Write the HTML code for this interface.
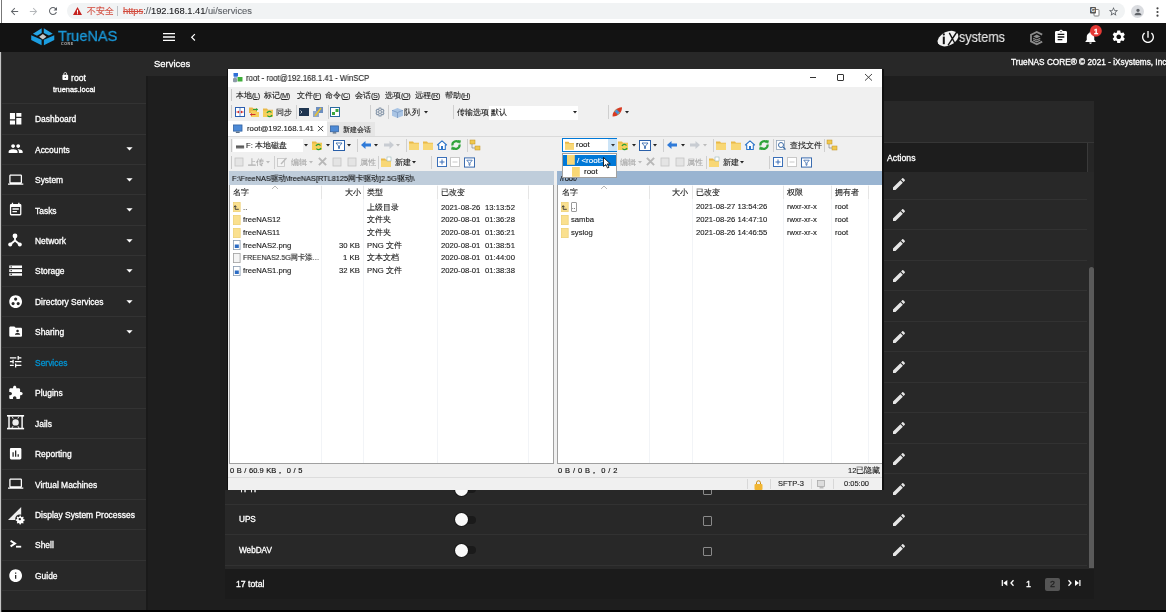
<!DOCTYPE html><html><head><meta charset="utf-8"><style>
html,body{margin:0;padding:0}
body{width:1166px;height:612px;overflow:hidden;position:relative;background:#1e1e1e;font-family:"Liberation Sans",sans-serif}
.t{position:absolute;white-space:nowrap;line-height:1;will-change:transform}
.m{-webkit-text-stroke:0.3px currentColor}
.w{-webkit-text-stroke:0.12px currentColor}
.b{position:absolute}
svg.b{overflow:visible}
</style></head><body>
<div class="b" style="left:0.00px;top:51.50px;width:146.50px;height:558.00px;background:#282828;"></div>
<div class="b" style="left:146.50px;top:51.50px;width:1019.50px;height:24.30px;background:#282828;"></div>
<div class="b" style="left:0.00px;top:609.60px;width:1166.00px;height:2.40px;background:#000;"></div>
<div class="b" style="left:0.00px;top:0.00px;width:1.00px;height:612.00px;background:#c4c4c4;"></div>
<div class="b" style="left:1.00px;top:22.50px;width:1.00px;height:590.00px;background:#383838;"></div>
<div class="b" style="left:0.00px;top:0.00px;width:1166.00px;height:22.50px;background:#ffffff;"></div>
<div class="b" style="left:1.00px;top:0.00px;width:1.00px;height:22.50px;background:#777;"></div>
<div class="b" style="left:67.00px;top:3.00px;width:1058.00px;height:16.00px;background:#f1f3f4;border-radius:8px"></div>
<svg class="b" style="left:8.80px;top:5.50px;" width="11" height="11" viewBox="0 0 24 24"><path fill="#5f6368" d="M20 11H7.83l5.59-5.59L12 4l-8 8 8 8 1.41-1.41L7.83 13H20v-2z"/></svg>
<svg class="b" style="left:28.10px;top:5.50px;" width="11" height="11" viewBox="0 0 24 24"><path fill="#b4b7ba" d="M12 4l-1.41 1.41L16.17 11H4v2h12.17l-5.58 5.59L12 20l8-8z"/></svg>
<svg class="b" style="left:47.10px;top:5.00px;" width="12" height="12" viewBox="0 0 24 24"><path fill="#5f6368" d="M17.65 6.35C16.2 4.9 14.21 4 12 4c-4.42 0-7.99 3.58-7.99 8s3.57 8 7.99 8c3.73 0 6.84-2.55 7.73-6h-2.08c-.82 2.33-3.04 4-5.65 4-3.31 0-6-2.690-6-6s2.69-6 6-6c1.66 0 3.14.69 4.22 1.78L13 11h7V4l-2.35 2.35z"/></svg>
<svg class="b" style="left:73.00px;top:6.50px;" width="9" height="8" viewBox="0 0 9 8"><path fill="#c5221f" d="M0 8 L4.5 0 L9 8 Z"/><rect x="4" y="2.8" width="1" height="3" fill="#fff"/><rect x="4" y="6.2" width="1" height="1" fill="#fff"/></svg>
<div class="t w" style="left:87.00px;top:7.30px;font-size:8.5px;color:#d24a3c;font-weight:normal;">不安全</div>
<div class="b" style="left:117.00px;top:6.00px;width:0.80px;height:10.00px;background:#bdc1c6;"></div>
<div class="t w" style="left:123.00px;top:6.71px;font-size:9.32px;color:#fff;font-weight:normal;"><span style="color:#d24a3c;text-decoration:line-through;text-decoration-thickness:0.5px">https</span><span style="color:#5f6368">://</span><span style="color:#202124">192.168.1.41</span><span style="color:#5f6368">/ui/services</span></div>
<svg class="b" style="left:1089.50px;top:7.00px;" width="9.5" height="9.5" viewBox="0 0 9.5 9.5"><rect x="4" y="2.5" width="5" height="6.5" rx="0.8" fill="#fff" stroke="#777" stroke-width="0.9"/><rect x="0" y="0" width="6" height="6.5" rx="0.8" fill="#555"/><text x="1.1" y="5.3" font-size="5.5" font-family="Liberation Sans" font-weight="bold" fill="#fff">G</text></svg>
<svg class="b" style="left:1108.00px;top:5.50px;" width="11" height="11" viewBox="0 0 24 24"><path fill="#5f6368" d="M22 9.24l-7.19-.62L12 2 9.19 8.63 2 9.24l5.46 4.73L5.82 21 12 17.27 18.18 21l-1.63-7.03L22 9.24zM12 15.4l-3.76 2.27 1-4.28-3.32-2.88 4.38-.38L12 6.1l1.71 4.04 4.38.38-3.32 2.88 1 4.28L12 15.4z"/></svg>
<svg class="b" style="left:1131.00px;top:5.00px;" width="13" height="13" viewBox="0 0 13 13"><circle cx="6.5" cy="6.5" r="6.5" fill="#dadce0"/></svg>
<svg class="b" style="left:1132.50px;top:6.50px;" width="10" height="10" viewBox="0 0 24 24"><path fill="#5f6368" d="M12 12c2.21 0 4-1.79 4-4s-1.79-4-4-4-4 1.79-4 4 1.79 4 4 4zm0 2c-2.67 0-8 1.34-8 4v2h16v-2c0-2.66-5.33-4-8-4z"/></svg>
<svg class="b" style="left:1156.00px;top:6.50px;" width="3" height="10" viewBox="0 0 3 10"><circle cx="1.5" cy="1.3" r="1.1" fill="#444"/><circle cx="1.5" cy="5" r="1.1" fill="#444"/><circle cx="1.5" cy="8.7" r="1.1" fill="#444"/></svg>
<div class="b" style="left:0.00px;top:22.50px;width:1166.00px;height:29.00px;background:#131313;"></div>
<svg class="b" style="left:30.60px;top:27.70px;" width="23.6" height="17.9" viewBox="0 0 23.6 17.9"><path fill="#27a6e6" d="M10.7 0.3 L1.9 5.8 L6 7.8 L10.7 5Z M12.8 0.3 L21.8 5.8 L17.9 7.5 L12.8 5Z"/><path fill="#1b9de0" d="M0.2 7.3 L10.6 11.8 L10.6 17.2 L0.2 12.1Z M23.3 7.3 L12.9 11.8 L12.9 17.2 L23.3 12.1Z"/><path fill="#c8c8c8" d="M11.9 6.1 L8.1 8.8 L11.9 11.4 L15.4 8.8Z"/></svg>
<div class="t w" style="left:58.30px;top:28.25px;font-size:15.3px;color:#1a98d8;font-weight:normal;transform:scaleX(0.95);transform-origin:left;-webkit-text-stroke:0.3px #1a98d8">TrueNAS</div>
<div class="t w" style="left:61.00px;top:43.45px;font-size:3.6px;color:#a0a0a0;font-weight:bold;letter-spacing:0.6px">CORE</div>
<svg class="b" style="left:161.20px;top:29.30px;" width="16" height="16" viewBox="0 0 24 24"><path fill="#fff" d="M3 18h18v-2H3v2zm0-5h18v-2H3v2zm0-7v2h18V6H3z"/></svg>
<svg class="b" style="left:186.05px;top:30.25px;" width="14.5" height="14.5" viewBox="0 0 24 24"><path fill="#fff" d="M15.41 7.41L14 6l-6 6 6 6 1.41-1.41L10.83 12z"/></svg>
<svg class="b" style="left:936.50px;top:30.50px;" width="22" height="15.2" viewBox="0 0 22 15.2"><ellipse cx="11" cy="7.6" rx="11" ry="6.9" fill="#f2f2f2" transform="rotate(-25 11 7.6)"/><rect x="5.8" y="5.6" width="2" height="7.6" fill="#131313"/><circle cx="6.8" cy="3.4" r="1.1" fill="#131313"/><path d="M12.3 1.8 L18.5 13.5 M19.8 1 L11 14.5" stroke="#131313" stroke-width="1.4"/></svg>
<div class="t w" style="left:959.30px;top:31.23px;font-size:13.9px;color:#e8e8e8;font-weight:normal;transform:scaleX(0.9);transform-origin:left">systems</div>
<svg class="b" style="left:1029.70px;top:30.80px;" width="13.5" height="14.2" viewBox="0 0 13.5 14.2"><path d="M12.2 3.6 L6.75 0.9 L1 3.8 L1 10.4 L6.75 13.3 L12.2 10.6" stroke="#8c8c8c" stroke-width="1.8" fill="none"/><path d="M6.75 3.6 L10.3 5.4 L6.75 7.2 L3.2 5.4Z" fill="#8c8c8c"/><path d="M3.2 7.2 L6.75 9 L10.3 7.2" stroke="#8c8c8c" stroke-width="1.1" fill="none"/><path d="M3.2 9 L6.75 10.8 L10.3 9" stroke="#8c8c8c" stroke-width="1.1" fill="none"/></svg>
<svg class="b" style="left:1053.00px;top:29.10px;" width="16" height="16" viewBox="0 0 24 24"><path fill="#fff" d="M19 3h-4.18C14.4 1.84 13.3 1 12 1c-1.3 0-2.4.84-2.82 2H5c-1.1 0-2 .9-2 2v14c0 1.1.9 2 2 2h14c1.1 0 2-.9 2-2V5c0-1.1-.9-2-2-2zm-7 0c.55 0 1 .45 1 1s-.45 1-1 1-1-.45-1-1 .45-1 1-1zm2 14H7v-2h7v2zm3-4H7v-2h10v2zm0-4H7V7h10v2z"/></svg>
<svg class="b" style="left:1082.50px;top:30.30px;" width="15" height="15" viewBox="0 0 24 24"><path fill="#fff" d="M12 22c1.1 0 2-.9 2-2h-4c0 1.1.89 2 2 2zm6-6v-5c0-3.07-1.64-5.64-4.5-6.32V4c0-.83-.67-1.5-1.5-1.5s-1.5.67-1.5 1.5v.68C7.63 5.36 6 7.92 6 11v5l-2 2v1h16v-1l-2-2z"/></svg>
<svg class="b" style="left:1090.40px;top:25.20px;" width="11.8" height="11.8" viewBox="0 0 11.8 11.8"><circle cx="5.9" cy="5.9" r="5.9" fill="#e53935"/></svg>
<div class="t m" style="left:1094.10px;top:27.75px;font-size:7.5px;color:#fff;font-weight:bold;">1</div>
<svg class="b" style="left:1111.45px;top:29.45px;" width="15.5" height="15.5" viewBox="0 0 24 24"><path fill="#fff" d="M19.14 12.94c.04-.3.06-.61.06-.94 0-.32-.02-.64-.07-.94l2.03-1.58c.18-.14.23-.41.12-.61l-1.92-3.32c-.12-.22-.37-.29-.59-.22l-2.39.96c-.5-.38-1.03-.7-1.62-.94l-.36-2.54c-.04-.24-.24-.41-.48-.41h-3.84c-.24 0-.43.17-.47.41l-.36 2.54c-.59.24-1.13.57-1.62.94l-2.39-.96c-.22-.08-.47 0-.59.22L2.74 8.87c-.12.21-.08.47.12.61l2.03 1.58c-.05.3-.09.63-.09.94s.02.64.07.94l-2.03 1.58c-.18.14-.23.41-.12.61l1.92 3.32c.12.22.37.29.59.22l2.39-.96c.5.38 1.03.7 1.62.94l.36 2.54c.05.24.24.41.48.41h3.84c.24 0 .44-.17.47-.41l.36-2.54c.59-.24 1.13-.56 1.62-.94l2.39.96c.22.08.47 0 .59-.22l1.92-3.32c.12-.22.07-.47-.12-.61l-2.01-1.58zM12 15.6c-1.98 0-3.6-1.62-3.6-3.6s1.62-3.6 3.6-3.6 3.6 1.62 3.6 3.6-1.62 3.6-3.6 3.6z"/></svg>
<svg class="b" style="left:1140.40px;top:29.40px;" width="16" height="16" viewBox="0 0 24 24"><path fill="#fff" d="M13 3h-2v10h2V3zm4.83 2.170l-1.42 1.42C17.99 7.86 19 9.81 19 12c0 3.87-3.13 7-7 7s-7-3.13-7-7c0-2.19 1.01-4.14 2.58-5.42L6.17 5.17C4.23 6.82 3 9.26 3 12c0 4.97 4.03 9 9 9s9-4.03 9-9c0-2.74-1.23-5.18-3.17-6.83z"/></svg>
<svg class="b" style="left:60.50px;top:72.30px;" width="8.6" height="8.6" viewBox="0 0 24 24"><path fill="#fff" d="M18 8h-1V6c0-2.76-2.24-5-5-5S7 3.24 7 6v2H6c-1.1 0-2 .9-2 2v10c0 1.1.9 2 2 2h12c1.1 0 2-.9 2-2V10c0-1.1-.9-2-2-2zm-6 9c-1.1 0-2-.9-2-2s.9-2 2-2 2 .9 2 2-.9 2-2 2zm3.1-9H8.9V6c0-1.71 1.39-3.1 3.1-3.1 1.71 0 3.1 1.39 3.1 3.1v2z"/></svg>
<div class="t m" style="left:70.60px;top:74.14px;font-size:8.7px;color:#fff;font-weight:normal;">root</div>
<div class="t m" style="left:52.60px;top:85.69px;font-size:7.45px;color:#fff;font-weight:normal;">truenas.local</div>
<div class="b" style="left:2.00px;top:103.10px;width:144.50px;height:1.00px;background:#333333;"></div>
<div class="t m" style="left:35.30px;top:115.15px;font-size:8.45px;color:#fff;font-weight:normal;">Dashboard</div>
<svg class="b" style="left:7.95px;top:110.87px;" width="15.3" height="15.3" viewBox="0 0 24 24"><path fill="#fff" d="M3 13h8V3H3v10zm0 8h8v-6H3v6zm10 0h8V11h-8v10zm0-18v6h8V3h-8z"/></svg>
<div class="b" style="left:2.00px;top:133.55px;width:144.50px;height:1.00px;background:#333333;"></div>
<div class="t m" style="left:35.30px;top:145.60px;font-size:8.45px;color:#fff;font-weight:normal;">Accounts</div>
<svg class="b" style="left:122.10px;top:141.47px;" width="15" height="15" viewBox="0 0 24 24"><path fill="#fff" d="M7 10l5 5 5-5z"/></svg>
<svg class="b" style="left:7.95px;top:141.32px;" width="15.3" height="15.3" viewBox="0 0 24 24"><path fill="#fff" d="M16 11c1.66 0 2.99-1.34 2.99-3S17.66 5 16 5c-1.66 0-3 1.34-3 3s1.34 3 3 3zm-8 0c1.66 0 2.99-1.34 2.99-3S9.66 5 8 5C6.34 5 5 6.34 5 8s1.34 3 3 3zm0 2c-2.330 0-7 1.17-7 3.5V19h14v-2.5c0-2.33-4.67-3.5-7-3.5zm8 0c-.29 0-.62.02-.97.05 1.16.84 1.97 1.97 1.97 3.45V19h6v-2.5c0-2.33-4.670-3.5-7-3.5z"/></svg>
<div class="b" style="left:2.00px;top:164.00px;width:144.50px;height:1.00px;background:#333333;"></div>
<div class="t m" style="left:35.30px;top:176.05px;font-size:8.45px;color:#fff;font-weight:normal;">System</div>
<svg class="b" style="left:122.10px;top:171.93px;" width="15" height="15" viewBox="0 0 24 24"><path fill="#fff" d="M7 10l5 5 5-5z"/></svg>
<svg class="b" style="left:7.95px;top:171.78px;" width="15.3" height="15.3" viewBox="0 0 24 24"><path fill="#fff" d="M20 18c1.1 0 1.99-.9 1.99-2L22 6c0-1.1-.9-2-2-2H4c-1.1 0-2 .9-2 2v10c0 1.1.9 2 2 2H0v2h24v-2h-4zM4 6h16v10H4V6z"/></svg>
<div class="b" style="left:2.00px;top:194.45px;width:144.50px;height:1.00px;background:#333333;"></div>
<div class="t m" style="left:35.30px;top:206.50px;font-size:8.45px;color:#fff;font-weight:normal;">Tasks</div>
<svg class="b" style="left:122.10px;top:202.38px;" width="15" height="15" viewBox="0 0 24 24"><path fill="#fff" d="M7 10l5 5 5-5z"/></svg>
<svg class="b" style="left:7.95px;top:202.22px;" width="15.3" height="15.3" viewBox="0 0 24 24"><path fill="#fff" d="M17 10H7v2h10v-2zm2-7h-1V1h-2v2H8V1H6v2H5c-1.11 0-1.99.9-1.99 2L3 19c0 1.1.89 2 2 2h14c1.1 0 2-.9 2-2V5c0-1.1-.9-2-2-2zm0 16H5V8h14v11zm-5-5H7v2h7v-2z"/></svg>
<div class="b" style="left:2.00px;top:224.90px;width:144.50px;height:1.00px;background:#333333;"></div>
<div class="t m" style="left:35.30px;top:236.95px;font-size:8.45px;color:#fff;font-weight:normal;">Network</div>
<svg class="b" style="left:122.10px;top:232.83px;" width="15" height="15" viewBox="0 0 24 24"><path fill="#fff" d="M7 10l5 5 5-5z"/></svg>
<svg class="b" style="left:7.50px;top:233.03px;" width="14" height="14" viewBox="0 0 14 14"><circle cx="7" cy="3" r="2.4" fill="#fff"/><circle cx="2.2" cy="11.5" r="2" fill="#fff"/><circle cx="11.8" cy="11.5" r="2" fill="#fff"/><path d="M7 3 V7.5 L2.2 11.5 M7 7.5 L11.8 11.5" stroke="#fff" stroke-width="1.8" fill="none"/></svg>
<div class="b" style="left:2.00px;top:255.35px;width:144.50px;height:1.00px;background:#333333;"></div>
<div class="t m" style="left:35.30px;top:267.40px;font-size:8.45px;color:#fff;font-weight:normal;">Storage</div>
<svg class="b" style="left:122.10px;top:263.28px;" width="15" height="15" viewBox="0 0 24 24"><path fill="#fff" d="M7 10l5 5 5-5z"/></svg>
<svg class="b" style="left:7.95px;top:263.13px;" width="15.3" height="15.3" viewBox="0 0 24 24"><path fill="#fff" d="M2 20h20v-4H2v4zm2-3h2v2H4v-2zM2 4v4h20V4H2zm4 3H4V5h2v2zm-4 7h20v-4H2v4zm2-3h2v2H4v-2z"/></svg>
<div class="b" style="left:2.00px;top:285.80px;width:144.50px;height:1.00px;background:#333333;"></div>
<div class="t m" style="left:35.30px;top:297.85px;font-size:8.45px;color:#fff;font-weight:normal;">Directory Services</div>
<svg class="b" style="left:122.10px;top:293.73px;" width="15" height="15" viewBox="0 0 24 24"><path fill="#fff" d="M7 10l5 5 5-5z"/></svg>
<svg class="b" style="left:7.95px;top:293.58px;" width="15.3" height="15.3" viewBox="0 0 24 24"><path fill="#fff" d="M12 2C6.48 2 2 6.48 2 12s4.48 10 10 10 10-4.48 10-10S17.52 2 12 2zM8 17.5c-1.38 0-2.5-1.12-2.5-2.5s1.12-2.5 2.5-2.5 2.5 1.12 2.5 2.5-1.12 2.5-2.5 2.5zM9.5 8c0-1.38 1.12-2.5 2.5-2.5s2.5 1.12 2.5 2.5-1.12 2.5-2.5 2.5S9.5 9.38 9.5 8zm6.5 9.5c-1.38 0-2.5-1.12-2.5-2.5s1.12-2.5 2.5-2.5 2.5 1.12 2.5 2.5-1.12 2.5-2.5 2.5z"/></svg>
<div class="b" style="left:2.00px;top:316.25px;width:144.50px;height:1.00px;background:#333333;"></div>
<div class="t m" style="left:35.30px;top:328.30px;font-size:8.45px;color:#fff;font-weight:normal;">Sharing</div>
<svg class="b" style="left:122.10px;top:324.18px;" width="15" height="15" viewBox="0 0 24 24"><path fill="#fff" d="M7 10l5 5 5-5z"/></svg>
<svg class="b" style="left:7.95px;top:324.03px;" width="15.3" height="15.3" viewBox="0 0 24 24"><path fill="#fff" d="M20 6h-8l-2-2H4c-1.1 0-1.99.9-1.99 2L2 18c0 1.1.9 2 2 2h16c1.1 0 2-.9 2-2V8c0-1.1-.9-2-2-2zm-5 3c1.1 0 2 .9 2 2s-.9 2-2 2-2-.9-2-2 .9-2 2-2zm4 8h-8v-1c0-1.33 2.67-2 4-2s4 .67 4 2v1z"/></svg>
<div class="b" style="left:2.00px;top:346.70px;width:144.50px;height:1.00px;background:#333333;"></div>
<div class="t m" style="left:35.30px;top:358.75px;font-size:8.45px;color:#0095d5;font-weight:normal;">Services</div>
<svg class="b" style="left:7.95px;top:354.48px;" width="15.3" height="15.3" viewBox="0 0 24 24"><path fill="#fff" d="M3 17v2h6v-2H3zM3 5v2h10V5H3zm10 16v-2h8v-2h-8v-2h-2v6h2zM7 9v2H3v2h4v2h2V9H7zm14 4v-2H11v2h10zm-6-4h2V7h4V5h-4V3h-2v6z"/></svg>
<div class="b" style="left:2.00px;top:377.15px;width:144.50px;height:1.00px;background:#333333;"></div>
<div class="t m" style="left:35.30px;top:389.20px;font-size:8.45px;color:#fff;font-weight:normal;">Plugins</div>
<svg class="b" style="left:7.95px;top:384.93px;" width="15.3" height="15.3" viewBox="0 0 24 24"><path fill="#fff" d="M20.5 11H19V7c0-1.1-.9-2-2-2h-4V3.5C13 2.12 11.880 1 10.5 1S8 2.12 8 3.5V5H4c-1.1 0-1.99.9-1.99 2v3.8H3.5c1.49 0 2.7 1.21 2.7 2.7s-1.21 2.7-2.7 2.7H2V20c0 1.1.9 2 2 2h3.8v-1.5c0-1.49 1.21-2.7 2.7-2.7 1.49 0 2.7 1.21 2.7 2.7V22H17c1.1 0 2-.9 2-2v-4h1.5c1.38 0 2.5-1.12 2.5-2.5S21.88 11 20.5 11z"/></svg>
<div class="b" style="left:2.00px;top:407.60px;width:144.50px;height:1.00px;background:#333333;"></div>
<div class="t m" style="left:35.30px;top:419.65px;font-size:8.45px;color:#fff;font-weight:normal;">Jails</div>
<svg class="b" style="left:6.90px;top:415.23px;" width="17.1" height="14.4" viewBox="0 0 17.1 14.4"><rect x="0" y="0" width="17.1" height="1.6" fill="#fff"/><rect x="0" y="12.8" width="17.1" height="1.6" fill="#fff"/><rect x="1.3" y="1" width="1.4" height="12.4" fill="#fff"/><rect x="14.4" y="1" width="1.4" height="12.4" fill="#fff"/><path d="M5 1.5 L12 13 M12 1.5 L5 13" stroke="#ddd" stroke-width="1"/><circle cx="8.6" cy="7.4" r="4.3" fill="#282828"/><circle cx="8.6" cy="7.4" r="3.2" fill="#eee"/></svg>
<div class="b" style="left:2.00px;top:438.05px;width:144.50px;height:1.00px;background:#333333;"></div>
<div class="t m" style="left:35.30px;top:450.10px;font-size:8.45px;color:#fff;font-weight:normal;">Reporting</div>
<svg class="b" style="left:7.95px;top:445.83px;" width="15.3" height="15.3" viewBox="0 0 24 24"><path fill="#fff" d="M19 3H5c-1.1 0-2 .9-2 2v14c0 1.1.9 2 2 2h14c1.1 0 2-.9 2-2V5c0-1.1-.9-2-2-2zM9 17H7v-7h2v7zm4 0h-2V7h2v10zm4 0h-2v-4h2v4z"/></svg>
<div class="b" style="left:2.00px;top:468.50px;width:144.50px;height:1.00px;background:#333333;"></div>
<div class="t m" style="left:35.30px;top:480.55px;font-size:8.45px;color:#fff;font-weight:normal;">Virtual Machines</div>
<svg class="b" style="left:7.95px;top:476.28px;" width="15.3" height="15.3" viewBox="0 0 24 24"><path fill="#fff" d="M20 18c1.1 0 1.99-.9 1.99-2L22 6c0-1.1-.9-2-2-2H4c-1.1 0-2 .9-2 2v10c0 1.1.9 2 2 2H0v2h24v-2h-4zM4 6h16v10H4V6z"/></svg>
<div class="b" style="left:2.00px;top:498.95px;width:144.50px;height:1.00px;background:#333333;"></div>
<div class="t m" style="left:35.30px;top:511.00px;font-size:8.45px;color:#fff;font-weight:normal;">Display System Processes</div>
<svg class="b" style="left:7.80px;top:507.07px;" width="17" height="15" viewBox="0 0 17 15"><path fill="#eee" d="M0 13 L13.2 0 L13.2 13 Z"/><circle cx="11.8" cy="12.1" r="4.6" fill="#282828"/><path fill="#fff" d="M11.8 8.6 l0.9 0 0.3 1.1 1 0.5 1-0.6 0.7 0.7 -0.6 1 0.5 1 1.1 0.3 0 1 -1.1 0.3 -0.5 1 0.6 1 -0.7 0.7 -1-0.6 -1 0.5 -0.3 1.1 -1 0 -0.3-1.1 -1-0.5 -1 0.6 -0.7-0.7 0.6-1 -0.5-1 -1.1-0.3 0-1 1.1-0.3 0.5-1 -0.6-1 0.7-0.7 1 0.6 1-0.5z"/><circle cx="11.8" cy="12.1" r="1.2" fill="#282828"/></svg>
<div class="b" style="left:2.00px;top:529.40px;width:144.50px;height:1.00px;background:#333333;"></div>
<div class="t m" style="left:35.30px;top:541.45px;font-size:8.45px;color:#fff;font-weight:normal;">Shell</div>
<svg class="b" style="left:9.80px;top:540.32px;" width="11.2" height="7.6" viewBox="0 0 11.2 7.6"><path d="M0.6 0.8 L5 3.6 L0.6 6.4" stroke="#fff" stroke-width="1.9" fill="none"/><rect x="6" y="5.8" width="5.2" height="1.8" fill="#fff"/></svg>
<div class="b" style="left:2.00px;top:559.85px;width:144.50px;height:1.00px;background:#333333;"></div>
<div class="t m" style="left:35.30px;top:571.90px;font-size:8.45px;color:#fff;font-weight:normal;">Guide</div>
<svg class="b" style="left:7.95px;top:567.62px;" width="15.3" height="15.3" viewBox="0 0 24 24"><path fill="#fff" d="M12 2C6.48 2 2 6.48 2 12s4.48 10 10 10 10-4.48 10-10S17.52 2 12 2zm1 15h-2v-6h2v6zm0-8h-2V7h2v2z"/></svg>
<div class="b" style="left:2.00px;top:590.30px;width:144.50px;height:1.00px;background:#333333;"></div>
<div class="b" style="left:146.30px;top:75.80px;width:1.60px;height:534.00px;background:#1a1a1a;"></div>
<div class="t m" style="left:153.70px;top:59.30px;font-size:9.45px;color:#fff;font-weight:normal;">Services</div>
<div class="t m" style="left:1010.70px;top:59.22px;font-size:8.25px;color:#fff;font-weight:normal;">TrueNAS CORE® © 2021 - iXsystems, Inc.</div>
<div class="b" style="left:224.50px;top:101.00px;width:869.30px;height:41.40px;background:#282828;"></div>
<div class="b" style="left:224.50px;top:142.00px;width:869.30px;height:1.00px;background:#363636;"></div>
<div class="b" style="left:224.50px;top:143.00px;width:862.90px;height:29.00px;background:#1d1d1d;"></div>
<div class="b" style="left:1087.40px;top:143.00px;width:6.40px;height:29.00px;background:#262626;"></div>
<div class="b" style="left:1087.20px;top:143.00px;width:1.00px;height:29.00px;background:#3a3a3a;"></div>
<div class="b" style="left:224.50px;top:172.00px;width:869.30px;height:396.50px;background:#282828;"></div>
<div class="b" style="left:224.50px;top:198.50px;width:862.90px;height:1.00px;background:#323232;"></div>
<div class="b" style="left:224.50px;top:229.00px;width:862.90px;height:1.00px;background:#323232;"></div>
<div class="b" style="left:224.50px;top:259.50px;width:862.90px;height:1.00px;background:#323232;"></div>
<div class="b" style="left:224.50px;top:290.00px;width:862.90px;height:1.00px;background:#323232;"></div>
<div class="b" style="left:224.50px;top:320.50px;width:862.90px;height:1.00px;background:#323232;"></div>
<div class="b" style="left:224.50px;top:351.00px;width:862.90px;height:1.00px;background:#323232;"></div>
<div class="b" style="left:224.50px;top:381.50px;width:862.90px;height:1.00px;background:#323232;"></div>
<div class="b" style="left:224.50px;top:412.00px;width:862.90px;height:1.00px;background:#323232;"></div>
<div class="b" style="left:224.50px;top:442.50px;width:862.90px;height:1.00px;background:#323232;"></div>
<div class="b" style="left:224.50px;top:473.00px;width:862.90px;height:1.00px;background:#323232;"></div>
<div class="b" style="left:224.50px;top:503.50px;width:862.90px;height:1.00px;background:#323232;"></div>
<div class="b" style="left:224.50px;top:534.00px;width:862.90px;height:1.00px;background:#323232;"></div>
<div class="b" style="left:224.50px;top:564.50px;width:862.90px;height:1.00px;background:#323232;"></div>
<div class="b" style="left:224.50px;top:568.50px;width:869.30px;height:30.80px;background:#1b1b1b;"></div>
<div class="b" style="left:1089.00px;top:267.00px;width:5.00px;height:301.00px;background:#5a5a5a;border-radius:2.5px 2.5px 0 0"></div>
<div class="t m" style="left:887.00px;top:154.44px;font-size:8.7px;color:#fff;font-weight:normal;">Actions</div>
<svg class="b" style="left:891.30px;top:176.30px;" width="16" height="16" viewBox="0 0 24 24"><path fill="#e6e6e6" d="M3 17.25V21h3.75L17.81 9.94l-3.75-3.75L3 17.25zM20.71 7.04c.39-.39.39-1.02 0-1.41l-2.34-2.34c-.39-.39-1.02-.39-1.41 0l-1.83 1.83 3.75 3.75 1.83-1.83z"/></svg>
<div class="b" style="left:455.70px;top:180.45px;width:20.60px;height:7.70px;background:#1a1a1a;border-radius:4px"></div>
<div class="b" style="left:454.90px;top:177.85px;width:12.9px;height:12.9px;border-radius:50%;background:#fafafa;box-shadow:0 0 0 0.8px #151515"></div>
<div class="b" style="left:702.70px;top:180.70px;width:9.80px;height:9.80px;background:transparent;box-sizing:border-box;border:1.4px solid #8a8a8a;border-radius:1px"></div>
<svg class="b" style="left:891.30px;top:206.80px;" width="16" height="16" viewBox="0 0 24 24"><path fill="#e6e6e6" d="M3 17.25V21h3.75L17.81 9.94l-3.75-3.75L3 17.25zM20.71 7.04c.39-.39.39-1.02 0-1.41l-2.34-2.34c-.39-.39-1.02-.39-1.41 0l-1.83 1.83 3.75 3.75 1.83-1.83z"/></svg>
<div class="b" style="left:455.70px;top:210.95px;width:20.60px;height:7.70px;background:#1a1a1a;border-radius:4px"></div>
<div class="b" style="left:454.90px;top:208.35px;width:12.9px;height:12.9px;border-radius:50%;background:#fafafa;box-shadow:0 0 0 0.8px #151515"></div>
<div class="b" style="left:702.70px;top:211.20px;width:9.80px;height:9.80px;background:transparent;box-sizing:border-box;border:1.4px solid #8a8a8a;border-radius:1px"></div>
<svg class="b" style="left:891.30px;top:237.30px;" width="16" height="16" viewBox="0 0 24 24"><path fill="#e6e6e6" d="M3 17.25V21h3.75L17.81 9.94l-3.75-3.75L3 17.25zM20.71 7.04c.39-.39.39-1.02 0-1.41l-2.34-2.34c-.39-.39-1.02-.39-1.41 0l-1.83 1.83 3.75 3.75 1.83-1.83z"/></svg>
<div class="b" style="left:455.70px;top:241.45px;width:20.60px;height:7.70px;background:#1a1a1a;border-radius:4px"></div>
<div class="b" style="left:454.90px;top:238.85px;width:12.9px;height:12.9px;border-radius:50%;background:#fafafa;box-shadow:0 0 0 0.8px #151515"></div>
<div class="b" style="left:702.70px;top:241.70px;width:9.80px;height:9.80px;background:transparent;box-sizing:border-box;border:1.4px solid #8a8a8a;border-radius:1px"></div>
<svg class="b" style="left:891.30px;top:267.80px;" width="16" height="16" viewBox="0 0 24 24"><path fill="#e6e6e6" d="M3 17.25V21h3.75L17.81 9.94l-3.75-3.75L3 17.25zM20.71 7.04c.39-.39.39-1.02 0-1.41l-2.34-2.34c-.39-.39-1.02-.39-1.41 0l-1.83 1.83 3.75 3.75 1.83-1.83z"/></svg>
<div class="b" style="left:455.70px;top:271.95px;width:20.60px;height:7.70px;background:#1a1a1a;border-radius:4px"></div>
<div class="b" style="left:454.90px;top:269.35px;width:12.9px;height:12.9px;border-radius:50%;background:#fafafa;box-shadow:0 0 0 0.8px #151515"></div>
<div class="b" style="left:702.70px;top:272.20px;width:9.80px;height:9.80px;background:transparent;box-sizing:border-box;border:1.4px solid #8a8a8a;border-radius:1px"></div>
<svg class="b" style="left:891.30px;top:298.30px;" width="16" height="16" viewBox="0 0 24 24"><path fill="#e6e6e6" d="M3 17.25V21h3.75L17.81 9.94l-3.75-3.75L3 17.25zM20.71 7.04c.39-.39.39-1.02 0-1.41l-2.34-2.34c-.39-.39-1.02-.39-1.41 0l-1.83 1.83 3.75 3.75 1.83-1.83z"/></svg>
<div class="b" style="left:455.70px;top:302.45px;width:20.60px;height:7.70px;background:#1a1a1a;border-radius:4px"></div>
<div class="b" style="left:454.90px;top:299.85px;width:12.9px;height:12.9px;border-radius:50%;background:#fafafa;box-shadow:0 0 0 0.8px #151515"></div>
<div class="b" style="left:702.70px;top:302.70px;width:9.80px;height:9.80px;background:transparent;box-sizing:border-box;border:1.4px solid #8a8a8a;border-radius:1px"></div>
<svg class="b" style="left:891.30px;top:328.80px;" width="16" height="16" viewBox="0 0 24 24"><path fill="#e6e6e6" d="M3 17.25V21h3.75L17.81 9.94l-3.75-3.75L3 17.25zM20.71 7.04c.39-.39.39-1.02 0-1.41l-2.34-2.34c-.39-.39-1.02-.39-1.41 0l-1.83 1.83 3.75 3.75 1.83-1.83z"/></svg>
<div class="b" style="left:455.70px;top:332.95px;width:20.60px;height:7.70px;background:#1a1a1a;border-radius:4px"></div>
<div class="b" style="left:454.90px;top:330.35px;width:12.9px;height:12.9px;border-radius:50%;background:#fafafa;box-shadow:0 0 0 0.8px #151515"></div>
<div class="b" style="left:702.70px;top:333.20px;width:9.80px;height:9.80px;background:transparent;box-sizing:border-box;border:1.4px solid #8a8a8a;border-radius:1px"></div>
<svg class="b" style="left:891.30px;top:359.30px;" width="16" height="16" viewBox="0 0 24 24"><path fill="#e6e6e6" d="M3 17.25V21h3.75L17.81 9.94l-3.75-3.75L3 17.25zM20.71 7.04c.39-.39.39-1.02 0-1.41l-2.34-2.34c-.39-.39-1.02-.39-1.41 0l-1.83 1.83 3.75 3.75 1.83-1.83z"/></svg>
<div class="b" style="left:455.70px;top:363.45px;width:20.60px;height:7.70px;background:#1a1a1a;border-radius:4px"></div>
<div class="b" style="left:454.90px;top:360.85px;width:12.9px;height:12.9px;border-radius:50%;background:#fafafa;box-shadow:0 0 0 0.8px #151515"></div>
<div class="b" style="left:702.70px;top:363.70px;width:9.80px;height:9.80px;background:transparent;box-sizing:border-box;border:1.4px solid #8a8a8a;border-radius:1px"></div>
<svg class="b" style="left:891.30px;top:389.80px;" width="16" height="16" viewBox="0 0 24 24"><path fill="#e6e6e6" d="M3 17.25V21h3.75L17.81 9.94l-3.75-3.75L3 17.25zM20.71 7.04c.39-.39.39-1.02 0-1.41l-2.34-2.34c-.39-.39-1.02-.39-1.41 0l-1.83 1.83 3.75 3.75 1.83-1.83z"/></svg>
<div class="b" style="left:455.70px;top:393.95px;width:20.60px;height:7.70px;background:#1a1a1a;border-radius:4px"></div>
<div class="b" style="left:454.90px;top:391.35px;width:12.9px;height:12.9px;border-radius:50%;background:#fafafa;box-shadow:0 0 0 0.8px #151515"></div>
<div class="b" style="left:702.70px;top:394.20px;width:9.80px;height:9.80px;background:transparent;box-sizing:border-box;border:1.4px solid #8a8a8a;border-radius:1px"></div>
<svg class="b" style="left:891.30px;top:420.30px;" width="16" height="16" viewBox="0 0 24 24"><path fill="#e6e6e6" d="M3 17.25V21h3.75L17.81 9.94l-3.75-3.75L3 17.25zM20.71 7.04c.39-.39.39-1.02 0-1.41l-2.34-2.34c-.39-.39-1.02-.39-1.41 0l-1.83 1.83 3.75 3.75 1.83-1.83z"/></svg>
<div class="b" style="left:455.70px;top:424.45px;width:20.60px;height:7.70px;background:#1a1a1a;border-radius:4px"></div>
<div class="b" style="left:454.90px;top:421.85px;width:12.9px;height:12.9px;border-radius:50%;background:#fafafa;box-shadow:0 0 0 0.8px #151515"></div>
<div class="b" style="left:702.70px;top:424.70px;width:9.80px;height:9.80px;background:transparent;box-sizing:border-box;border:1.4px solid #8a8a8a;border-radius:1px"></div>
<svg class="b" style="left:891.30px;top:450.80px;" width="16" height="16" viewBox="0 0 24 24"><path fill="#e6e6e6" d="M3 17.25V21h3.75L17.81 9.94l-3.75-3.75L3 17.25zM20.71 7.04c.39-.39.39-1.02 0-1.41l-2.34-2.34c-.39-.39-1.02-.39-1.41 0l-1.83 1.83 3.75 3.75 1.83-1.83z"/></svg>
<div class="b" style="left:455.70px;top:454.95px;width:20.60px;height:7.70px;background:#1a1a1a;border-radius:4px"></div>
<div class="b" style="left:454.90px;top:452.35px;width:12.9px;height:12.9px;border-radius:50%;background:#fafafa;box-shadow:0 0 0 0.8px #151515"></div>
<div class="b" style="left:702.70px;top:455.20px;width:9.80px;height:9.80px;background:transparent;box-sizing:border-box;border:1.4px solid #8a8a8a;border-radius:1px"></div>
<svg class="b" style="left:891.30px;top:481.30px;" width="16" height="16" viewBox="0 0 24 24"><path fill="#e6e6e6" d="M3 17.25V21h3.75L17.81 9.94l-3.75-3.75L3 17.25zM20.71 7.04c.39-.39.39-1.02 0-1.41l-2.34-2.34c-.39-.39-1.02-.39-1.41 0l-1.83 1.83 3.75 3.75 1.83-1.83z"/></svg>
<div class="t m" style="left:238.50px;top:485.66px;font-size:8.2px;color:#fff;font-weight:normal;">TFTP</div>
<div class="b" style="left:455.70px;top:485.45px;width:20.60px;height:7.70px;background:#1a1a1a;border-radius:4px"></div>
<div class="b" style="left:454.90px;top:482.85px;width:12.9px;height:12.9px;border-radius:50%;background:#fafafa;box-shadow:0 0 0 0.8px #151515"></div>
<div class="b" style="left:702.70px;top:485.70px;width:9.80px;height:9.80px;background:transparent;box-sizing:border-box;border:1.4px solid #8a8a8a;border-radius:1px"></div>
<svg class="b" style="left:891.30px;top:511.80px;" width="16" height="16" viewBox="0 0 24 24"><path fill="#e6e6e6" d="M3 17.25V21h3.75L17.81 9.94l-3.75-3.75L3 17.25zM20.71 7.04c.39-.39.39-1.02 0-1.41l-2.34-2.34c-.39-.39-1.02-.39-1.41 0l-1.83 1.83 3.75 3.75 1.83-1.83z"/></svg>
<div class="t m" style="left:238.50px;top:516.16px;font-size:8.2px;color:#fff;font-weight:normal;">UPS</div>
<div class="b" style="left:455.70px;top:515.95px;width:20.60px;height:7.70px;background:#1a1a1a;border-radius:4px"></div>
<div class="b" style="left:454.90px;top:513.35px;width:12.9px;height:12.9px;border-radius:50%;background:#fafafa;box-shadow:0 0 0 0.8px #151515"></div>
<div class="b" style="left:702.70px;top:516.20px;width:9.80px;height:9.80px;background:transparent;box-sizing:border-box;border:1.4px solid #8a8a8a;border-radius:1px"></div>
<svg class="b" style="left:891.30px;top:542.30px;" width="16" height="16" viewBox="0 0 24 24"><path fill="#e6e6e6" d="M3 17.25V21h3.75L17.81 9.94l-3.75-3.75L3 17.25zM20.71 7.04c.39-.39.39-1.02 0-1.41l-2.34-2.34c-.39-.39-1.02-.39-1.41 0l-1.83 1.83 3.75 3.75 1.83-1.83z"/></svg>
<div class="t m" style="left:238.50px;top:546.66px;font-size:8.2px;color:#fff;font-weight:normal;">WebDAV</div>
<div class="b" style="left:455.70px;top:546.45px;width:20.60px;height:7.70px;background:#1a1a1a;border-radius:4px"></div>
<div class="b" style="left:454.90px;top:543.85px;width:12.9px;height:12.9px;border-radius:50%;background:#fafafa;box-shadow:0 0 0 0.8px #151515"></div>
<div class="b" style="left:702.70px;top:546.70px;width:9.80px;height:9.80px;background:transparent;box-sizing:border-box;border:1.4px solid #8a8a8a;border-radius:1px"></div>
<div class="t m" style="left:236.00px;top:579.64px;font-size:8.7px;color:#fff;font-weight:normal;">17 total</div>
<svg class="b" style="left:998.50px;top:578.80px;" width="20" height="8" viewBox="0 0 20 8"><rect x="2.7" y="1" width="1.2" height="6" fill="#fff"/><path d="M8.3 1 L4.3 4 L8.3 7Z" fill="#fff"/><path d="M14.5 1.3 L12 4 L14.5 6.7" stroke="#fff" stroke-width="1.3" fill="none"/></svg>
<div class="t m" style="left:1025.50px;top:580.18px;font-size:9px;color:#fff;font-weight:normal;">1</div>
<div class="b" style="left:1045.00px;top:577.80px;width:15.00px;height:13.20px;background:#555;border-radius:2px"></div>
<div class="t m" style="left:1049.60px;top:579.98px;font-size:9px;color:#222;font-weight:normal;">2</div>
<svg class="b" style="left:1064.70px;top:578.80px;" width="20" height="8" viewBox="0 0 20 8"><path d="M3.5 1.3 L6 4 L3.5 6.7" stroke="#fff" stroke-width="1.3" fill="none"/><path d="M10 1 L14 4 L10 7Z" fill="#fff"/><rect x="14.3" y="1" width="1.2" height="6" fill="#fff"/></svg>
<div class="b" style="left:224.00px;top:75.80px;width:4.20px;height:414.70px;background:#1e1e1e;"></div>
<div class="b" style="left:227.20px;top:68.50px;width:656.80px;height:421.70px;background:#101010;"></div>
<div class="b" style="left:228.00px;top:69.00px;width:654.40px;height:420.50px;background:#f0f0f0;"></div>
<div class="b" style="left:228.00px;top:69.00px;width:654.40px;height:17.80px;background:#ffffff;"></div>
<svg class="b" style="left:233.30px;top:72.70px;" width="9.5" height="9.2" viewBox="0 0 9.5 9.2"><rect x="0.5" y="0" width="4.5" height="3.5" fill="#2f6fd6"/><rect x="1" y="3.5" width="3" height="1" fill="#2f6fd6"/><rect x="4.5" y="4" width="5" height="4.5" fill="#3fae3a"/><rect x="0" y="5" width="4" height="4.2" rx="1" fill="#8c9aa8"/></svg>
<div class="t w" style="left:246.00px;top:73.62px;font-size:8.6px;color:#1a1a1a;font-weight:normal;transform:scaleX(0.905);transform-origin:left">root - root@192.168.1.41 - WinSCP</div>
<div class="b" style="left:810.00px;top:77.00px;width:6.00px;height:1.00px;background:#333;"></div>
<div class="b" style="left:837.20px;top:74.30px;width:6.70px;height:6.30px;background:transparent;box-sizing:border-box;border:1px solid #333;border-radius:1px"></div>
<svg class="b" style="left:864.90px;top:74.10px;" width="7" height="6.6" viewBox="0 0 7 6.6"><path d="M0 0 L7 6.6 M7 0 L0 6.6" stroke="#333" stroke-width="0.9"/></svg>
<div class="b" style="left:231.00px;top:89.00px;width:0.80px;height:12.00px;background:#c8c8c8;"></div>
<div class="t w" style="left:235.50px;top:92.27px;font-size:7.6px;color:#222;font-weight:normal;">本地<span style="font-size:7.4px;letter-spacing:-0.45px">(<u>L</u>)</span></div>
<div class="t w" style="left:264.40px;top:92.27px;font-size:7.6px;color:#222;font-weight:normal;">标记<span style="font-size:7.4px;letter-spacing:-0.45px">(<u>M</u>)</span></div>
<div class="t w" style="left:296.60px;top:92.27px;font-size:7.6px;color:#222;font-weight:normal;">文件<span style="font-size:7.4px;letter-spacing:-0.45px">(<u>F</u>)</span></div>
<div class="t w" style="left:324.70px;top:92.27px;font-size:7.6px;color:#222;font-weight:normal;">命令<span style="font-size:7.4px;letter-spacing:-0.45px">(<u>C</u>)</span></div>
<div class="t w" style="left:354.90px;top:92.27px;font-size:7.6px;color:#222;font-weight:normal;">会话<span style="font-size:7.4px;letter-spacing:-0.45px">(<u>S</u>)</span></div>
<div class="t w" style="left:384.60px;top:92.27px;font-size:7.6px;color:#222;font-weight:normal;">选项<span style="font-size:7.4px;letter-spacing:-0.45px">(<u>O</u>)</span></div>
<div class="t w" style="left:415.40px;top:92.27px;font-size:7.6px;color:#222;font-weight:normal;">远程<span style="font-size:7.4px;letter-spacing:-0.45px">(<u>R</u>)</span></div>
<div class="t w" style="left:445.30px;top:92.27px;font-size:7.6px;color:#222;font-weight:normal;">帮助<span style="font-size:7.4px;letter-spacing:-0.45px">(<u>H</u>)</span></div>
<div class="b" style="left:231.00px;top:105.00px;width:0.80px;height:13.00px;background:#c8c8c8;"></div>
<svg class="b" style="left:234.90px;top:107.00px;" width="10" height="10" viewBox="0 0 10 10"><rect x="0.5" y="0.5" width="9" height="9" fill="#fff" stroke="#2a5db0"/><path d="M5 1 V9" stroke="#2a5db0" stroke-width="0.7"/><path d="M1.5 5 H3.5 M6.5 5 H8.5" stroke="#d02020" stroke-width="1"/><path d="M4.6 5 L3 3.4 V6.6Z M5.4 5 L7 3.4 V6.6Z" fill="#d02020"/></svg>
<svg class="b" style="left:249.00px;top:107.00px;" width="10" height="10" viewBox="0 0 10 10"><path d="M0 0.5 H3.5 L4.5 1.5 H8 V6 H0Z" fill="#e9b949"/><path d="M2 4 H6 L7 5 H10 V10 H2Z" fill="#f6cf5a"/><path d="M4 2.5 H8.5 L7.5 1.3 M8.5 2.5 L7.5 3.7" stroke="#2aa03a" stroke-width="1" fill="none"/><path d="M6.5 7.5 H1.5 L2.5 6.3 M1.5 7.5 L2.5 8.7" stroke="#d03030" stroke-width="1" fill="none"/></svg>
<svg class="b" style="left:263.00px;top:107.00px;" width="10" height="10" viewBox="0 0 10 10"><path d="M0 1.5 H4 L5 2.8 H10 V10 H0Z" fill="#e9b949"/><rect x="0" y="3.5" width="10" height="6.5" fill="#f6cf5a"/><path d="M4 6 A2.5 2.5 0 0 1 8.5 5.5" stroke="#2aa03a" stroke-width="1.3" fill="none"/><path d="M9 8 A2.5 2.5 0 0 1 4.5 8.5" stroke="#2aa03a" stroke-width="1.3" fill="none"/></svg>
<div class="t w" style="left:276.00px;top:108.57px;font-size:7.6px;color:#222;font-weight:normal;">同步</div>
<div class="b" style="left:295.50px;top:105.00px;width:0.80px;height:14.00px;background:#cfcfcf;"></div>
<svg class="b" style="left:299.00px;top:107.00px;" width="10" height="10" viewBox="0 0 10 10"><rect x="0" y="1" width="10" height="8" fill="#1f3550"/><path d="M1.5 3.5 L3 5 L1.5 6.5" stroke="#fff" stroke-width="0.7" fill="none"/></svg>
<svg class="b" style="left:313.00px;top:107.00px;" width="10" height="10" viewBox="0 0 10 10"><rect x="3" y="0" width="7" height="6" fill="#6c8ebf"/><rect x="0" y="4" width="6" height="6" fill="#8fa7c9"/><path d="M2 9 L8 1" stroke="#e6c030" stroke-width="1.5"/></svg>
<div class="b" style="left:327.50px;top:105.00px;width:0.80px;height:14.00px;background:#cfcfcf;"></div>
<svg class="b" style="left:330.00px;top:107.00px;" width="10" height="10" viewBox="0 0 10 10"><rect x="0.5" y="0.5" width="9" height="9" fill="#fff" stroke="#2a6aa0"/><rect x="2" y="5" width="3" height="3" fill="#3aa63a"/><rect x="5.5" y="2" width="3" height="3" fill="#3aa63a"/></svg>
<div class="b" style="left:370.00px;top:105.00px;width:0.80px;height:14.00px;background:#cfcfcf;"></div>
<svg class="b" style="left:374.50px;top:107.00px;" width="10" height="10" viewBox="0 0 24 24"><path fill="none" stroke="#8595a8" stroke-width="2.6" d="M19.14 12.94c.04-.3.06-.61.06-.94 0-.32-.02-.64-.07-.94l2.03-1.58c.18-.14.23-.41.12-.61l-1.92-3.32c-.12-.22-.37-.29-.59-.22l-2.39.96c-.5-.38-1.03-.7-1.62-.94l-.36-2.54c-.04-.24-.24-.41-.48-.41h-3.84c-.24 0-.43.17-.47.41l-.36 2.54c-.59.24-1.13.57-1.62.94l-2.39-.96c-.22-.08-.47 0-.59.22L2.74 8.87c-.12.21-.08.47.12.61l2.03 1.58c-.05.3-.09.63-.09.94s.02.64.07.94l-2.03 1.58c-.18.14-.23.41-.12.61l1.92 3.32c.12.22.37.29.59.22l2.39-.96c.5.38 1.03.7 1.62.94l.36 2.54c.05.24.24.41.48.41h3.84c.24 0 .44-.17.47-.41l.36-2.54c.59-.24 1.13-.56 1.62-.94l2.39.96c.22.08.47 0 .59-.22l1.92-3.32c.12-.22.07-.47-.12-.61l-2.01-1.58zM12 15.6c-1.98 0-3.6-1.62-3.6-3.6s1.62-3.6 3.6-3.6 3.6 1.62 3.6 3.6-1.62 3.6-3.6 3.6z"/></svg>
<div class="b" style="left:388.40px;top:105.00px;width:0.80px;height:14.00px;background:#cfcfcf;"></div>
<svg class="b" style="left:391.50px;top:106.50px;" width="11" height="11" viewBox="0 0 10 10"><path d="M0 3 L5 1 L10 3 L10 8 L5 10 L0 8Z" fill="#a9c4e4"/><path d="M0 3 L5 5 L10 3 M5 5 V10" stroke="#7d9cc4" stroke-width="0.8" fill="none"/></svg>
<div class="t w" style="left:404.00px;top:108.57px;font-size:7.6px;color:#222;font-weight:normal;">队列</div>
<svg class="b" style="left:423.50px;top:110.80px;" width="4" height="2.4" viewBox="0 0 4 2.4"><path d="M0 0 H4 L2 2.4Z" fill="#222"/></svg>
<div class="b" style="left:453.30px;top:105.00px;width:0.80px;height:14.00px;background:#cfcfcf;"></div>
<div class="t w" style="left:457.00px;top:108.57px;font-size:7.6px;color:#222;font-weight:normal;">传输选项</div>
<div class="b" style="left:489.30px;top:106.00px;width:88.70px;height:13.70px;background:#fff;"></div>
<div class="t w" style="left:490.50px;top:108.57px;font-size:7.6px;color:#222;font-weight:normal;">默认</div>
<svg class="b" style="left:573.00px;top:110.80px;" width="4" height="2.4" viewBox="0 0 4 2.4"><path d="M0 0 H4 L2 2.4Z" fill="#222"/></svg>
<div class="b" style="left:608.00px;top:105.00px;width:0.80px;height:14.00px;background:#cfcfcf;"></div>
<svg class="b" style="left:611.80px;top:106.90px;" width="10.3" height="10.1" viewBox="0 0 10 10"><path d="M0.5 9.5 C0 5 4 0.5 9.8 0.3 C10 5 6 9.8 0.5 9.5Z" fill="#d83a22"/><path d="M2.5 4.5 L5.5 7.5 L7.5 5.5 L4.5 2.5Z" fill="#4a8fd8"/><path d="M2.5 4.5 L3.5 3.5 L4.5 2.5" stroke="#6fd08a" stroke-width="0.9"/><path d="M5.5 7.5 L7.5 5.5" stroke="#6fd08a" stroke-width="0.9"/></svg>
<svg class="b" style="left:625.00px;top:110.80px;" width="4" height="2.4" viewBox="0 0 4 2.4"><path d="M0 0 H4 L2 2.4Z" fill="#222"/></svg>
<div class="b" style="left:228.00px;top:120.50px;width:654.40px;height:16.00px;background:#f0f0f0;"></div>
<div class="b" style="left:228.00px;top:121.00px;width:98.80px;height:15.80px;background:#ffffff;"></div>
<div class="b" style="left:326.80px;top:122.00px;width:48.70px;height:14.80px;background:#e6e6e6;"></div>
<svg class="b" style="left:233.00px;top:124.00px;" width="9.5" height="9.5" viewBox="0 0 10 10"><rect x="0.5" y="1" width="9" height="6.5" fill="#4d8ad6" stroke="#2f5f9f" stroke-width="0.8"/><rect x="3" y="8" width="4" height="1.5" fill="#5a6f86"/></svg>
<div class="t w" style="left:246.50px;top:124.70px;font-size:7.8px;color:#222;font-weight:normal;">root@192.168.1.41</div>
<svg class="b" style="left:317.80px;top:126.00px;" width="5.2" height="5.2" viewBox="0 0 5.2 5.2"><path d="M0 0 L5.2 5.2 M5.2 0 L0 5.2" stroke="#333" stroke-width="0.9"/></svg>
<svg class="b" style="left:330.00px;top:124.50px;" width="9" height="9" viewBox="0 0 10 10"><rect x="0.5" y="1" width="9" height="6.5" fill="#4d8ad6" stroke="#2f5f9f" stroke-width="0.8"/><rect x="3" y="8" width="4" height="1.5" fill="#5a6f86"/></svg>
<div class="t w" style="left:343.00px;top:125.54px;font-size:7.4px;color:#222;font-weight:normal;">新建会话</div>
<div class="b" style="left:228.00px;top:136.30px;width:654.40px;height:0.80px;background:#dadada;"></div>
<div class="b" style="left:231.00px;top:139.00px;width:0.80px;height:13.00px;background:#c8c8c8;"></div>
<div class="b" style="left:232.50px;top:138.50px;width:70.20px;height:13.80px;background:#fff;"></div>
<svg class="b" style="left:235.50px;top:140.40px;" width="9" height="10" viewBox="0 0 10 10"><rect x="0" y="5.5" width="9" height="3" fill="#5a5a5a"/><rect x="0" y="8" width="9" height="1" fill="#999"/></svg>
<div class="t w" style="left:246.00px;top:141.97px;font-size:7.6px;color:#222;font-weight:normal;">F: 本地磁盘</div>
<svg class="b" style="left:303.50px;top:144.20px;" width="4" height="2.4" viewBox="0 0 4 2.4"><path d="M0 0 H4 L2 2.4Z" fill="#222"/></svg>
<svg class="b" style="left:312.00px;top:140.40px;" width="10" height="10" viewBox="0 0 10 10"><path d="M0 1.5 H4 L5 2.8 H10 V10 H0Z" fill="#e9b949"/><rect x="0" y="3.5" width="10" height="6.5" fill="#f6cf5a"/><path d="M4 6 A2.5 2.5 0 0 1 8.5 5.5" stroke="#2aa03a" stroke-width="1.3" fill="none"/><path d="M9 8 A2.5 2.5 0 0 1 4.5 8.5" stroke="#2aa03a" stroke-width="1.3" fill="none"/></svg>
<svg class="b" style="left:325.70px;top:144.20px;" width="4" height="2.4" viewBox="0 0 4 2.4"><path d="M0 0 H4 L2 2.4Z" fill="#222"/></svg>
<svg class="b" style="left:333.00px;top:139.90px;" width="12" height="11" viewBox="0 0 12 11"><rect x="0.5" y="0.5" width="11" height="10" fill="#fff" stroke="#2a5fa8" stroke-width="1"/><path d="M3 3 H9 L6.5 6 V8.5 H5.5 V6Z" fill="none" stroke="#2a5fa8" stroke-width="0.8"/></svg>
<svg class="b" style="left:347.00px;top:144.20px;" width="4" height="2.4" viewBox="0 0 4 2.4"><path d="M0 0 H4 L2 2.4Z" fill="#222"/></svg>
<div class="b" style="left:357.00px;top:139.00px;width:0.80px;height:13.00px;background:#cfcfcf;"></div>
<svg class="b" style="left:361.00px;top:140.40px;" width="10" height="10" viewBox="0 0 10 10"><path d="M0 5 L4.5 1 V3.5 H10 V6.5 H4.5 V9Z" fill="#2f7ad8"/></svg>
<svg class="b" style="left:374.00px;top:144.20px;" width="4" height="2.4" viewBox="0 0 4 2.4"><path d="M0 0 H4 L2 2.4Z" fill="#222"/></svg>
<svg class="b" style="left:384.00px;top:140.40px;" width="10" height="10" viewBox="0 0 10 10"><path d="M10 5 L5.5 1 V3.5 H0 V6.5 H5.5 V9Z" fill="#c8ccd2"/></svg>
<svg class="b" style="left:396.00px;top:144.20px;" width="4" height="2.4" viewBox="0 0 4 2.4"><path d="M0 0 H4 L2 2.4Z" fill="#bbb"/></svg>
<div class="b" style="left:406.00px;top:139.00px;width:0.80px;height:13.00px;background:#cfcfcf;"></div>
<svg class="b" style="left:409.00px;top:140.40px;" width="10" height="10" viewBox="0 0 10 10"><path d="M0 1.5 H4 L5 2.8 H10 V10 H0Z" fill="#e9b949"/><rect x="0" y="3.5" width="10" height="6.5" fill="#f8d775"/></svg>
<svg class="b" style="left:423.00px;top:140.40px;" width="10" height="10" viewBox="0 0 10 10"><path d="M0 1.5 H4 L5 2.8 H10 V10 H0Z" fill="#e9b949"/><rect x="0" y="3.5" width="10" height="6.5" fill="#f8d775"/></svg>
<svg class="b" style="left:437.00px;top:140.40px;" width="10" height="10" viewBox="0 0 10 10"><path d="M5 0.8 L9.6 5 H8.3 V9.5 H1.7 V5 H0.4Z" fill="#fff" stroke="#2f76c8" stroke-width="1.1" stroke-linejoin="round"/><rect x="4" y="6" width="2" height="3.5" fill="#2f76c8"/></svg>
<svg class="b" style="left:451.00px;top:140.40px;" width="10" height="10" viewBox="0 0 10 10"><path d="M1.5 5.5 A3.7 3.7 0 0 1 8 2.5" stroke="#2ea33a" stroke-width="2.2" fill="none"/><path d="M8.5 4.5 A3.7 3.7 0 0 1 2 7.5" stroke="#2ea33a" stroke-width="2.2" fill="none"/><path d="M6.5 0 L10 0.5 L9 4Z M3.5 10 L0 9.5 L1 6Z" fill="#2ea33a"/></svg>
<div class="b" style="left:467.00px;top:139.00px;width:0.80px;height:13.00px;background:#cfcfcf;"></div>
<svg class="b" style="left:469.50px;top:140.40px;" width="10" height="10" viewBox="0 0 10 10"><rect x="0" y="0" width="5" height="4" fill="#f0c850" stroke="#c09020" stroke-width="0.5"/><rect x="5" y="6" width="5" height="4" fill="#f0c850" stroke="#c09020" stroke-width="0.5"/><path d="M2 4 V8 H5" stroke="#777" stroke-width="0.6" fill="none"/></svg>
<div class="b" style="left:231.00px;top:156.00px;width:0.80px;height:13.00px;background:#c8c8c8;"></div>
<svg class="b" style="left:234.00px;top:157.30px;" width="10" height="10" viewBox="0 0 10 10"><rect x="1" y="1" width="8" height="8" fill="#e4e4e4" stroke="#c4c4c4" stroke-width="0.8"/></svg>
<div class="t w" style="left:248.00px;top:158.87px;font-size:7.6px;color:#a8a8a8;font-weight:normal;">上传</div>
<svg class="b" style="left:266.00px;top:161.10px;" width="4" height="2.4" viewBox="0 0 4 2.4"><path d="M0 0 H4 L2 2.4Z" fill="#bbb"/></svg>
<div class="b" style="left:274.00px;top:156.00px;width:0.80px;height:13.00px;background:#cfcfcf;"></div>
<svg class="b" style="left:277.00px;top:157.30px;" width="10" height="10" viewBox="0 0 10 10"><rect x="0.5" y="1.5" width="7" height="8" fill="#f4f4f4" stroke="#c4c4c4" stroke-width="0.8"/><path d="M4 7 L9.5 1" stroke="#bbb" stroke-width="1.4"/></svg>
<div class="t w" style="left:291.00px;top:158.87px;font-size:7.6px;color:#a8a8a8;font-weight:normal;">编辑</div>
<svg class="b" style="left:309.00px;top:161.10px;" width="4" height="2.4" viewBox="0 0 4 2.4"><path d="M0 0 H4 L2 2.4Z" fill="#bbb"/></svg>
<svg class="b" style="left:318.00px;top:157.30px;" width="9" height="9" viewBox="0 0 10 10"><path d="M1 1 L9 9 M9 1 L1 9" stroke="#b8b8b8" stroke-width="2.2"/></svg>
<svg class="b" style="left:332.00px;top:157.30px;" width="10" height="10" viewBox="0 0 10 10"><rect x="1" y="1" width="8" height="8" fill="#e4e4e4" stroke="#c4c4c4" stroke-width="0.8"/></svg>
<svg class="b" style="left:347.00px;top:157.30px;" width="10" height="10" viewBox="0 0 10 10"><rect x="1" y="1" width="8" height="8" fill="#e4e4e4" stroke="#c4c4c4" stroke-width="0.8"/></svg>
<div class="t w" style="left:360.00px;top:158.87px;font-size:7.6px;color:#a8a8a8;font-weight:normal;">属性</div>
<div class="b" style="left:378.00px;top:156.00px;width:0.80px;height:13.00px;background:#cfcfcf;"></div>
<svg class="b" style="left:381.00px;top:157.30px;" width="10" height="10" viewBox="0 0 10 10"><path d="M0 1.5 H4 L5 2.8 H10 V10 H0Z" fill="#e9b949"/><rect x="0" y="3.5" width="10" height="6.5" fill="#f8d775"/><rect x="6" y="0" width="4" height="4" fill="#fff" stroke="#8aa" stroke-width="0.5"/></svg>
<div class="t w" style="left:394.50px;top:158.87px;font-size:7.6px;color:#222;font-weight:normal;">新建</div>
<svg class="b" style="left:412.00px;top:161.10px;" width="4" height="2.4" viewBox="0 0 4 2.4"><path d="M0 0 H4 L2 2.4Z" fill="#222"/></svg>
<div class="b" style="left:431.00px;top:156.00px;width:0.80px;height:13.00px;background:#cfcfcf;"></div>
<svg class="b" style="left:436.50px;top:157.30px;" width="10" height="10" viewBox="0 0 10 10"><rect x="0.5" y="0.5" width="9" height="9" fill="#fff" stroke="#3a6fb8"/><path d="M2.5 5 H7.5 M5 2.5 V7.5" stroke="#3a6fb8" stroke-width="1"/></svg>
<svg class="b" style="left:450.00px;top:157.30px;" width="10" height="10" viewBox="0 0 10 10"><rect x="0.5" y="0.5" width="9" height="9" fill="#fff" stroke="#c8c8c8"/><path d="M2.5 5 H7.5" stroke="#c8c8c8" stroke-width="1"/></svg>
<svg class="b" style="left:464.00px;top:156.80px;" width="11" height="11" viewBox="0 0 12 11"><rect x="0.5" y="0.5" width="11" height="10" fill="#fff" stroke="#2a5fa8" stroke-width="1"/><path d="M3 3 H9 L6.5 6 V8.5 H5.5 V6Z" fill="none" stroke="#2a5fa8" stroke-width="0.8"/></svg>
<svg class="b" style="left:617.50px;top:140.40px;" width="10" height="10" viewBox="0 0 10 10"><path d="M0 1.5 H4 L5 2.8 H10 V10 H0Z" fill="#e9b949"/><rect x="0" y="3.5" width="10" height="6.5" fill="#f6cf5a"/><path d="M4 6 A2.5 2.5 0 0 1 8.5 5.5" stroke="#2aa03a" stroke-width="1.3" fill="none"/><path d="M9 8 A2.5 2.5 0 0 1 4.5 8.5" stroke="#2aa03a" stroke-width="1.3" fill="none"/></svg>
<svg class="b" style="left:631.50px;top:144.20px;" width="4" height="2.4" viewBox="0 0 4 2.4"><path d="M0 0 H4 L2 2.4Z" fill="#222"/></svg>
<svg class="b" style="left:639.00px;top:139.90px;" width="12" height="11" viewBox="0 0 12 11"><rect x="0.5" y="0.5" width="11" height="10" fill="#fff" stroke="#2a5fa8" stroke-width="1"/><path d="M3 3 H9 L6.5 6 V8.5 H5.5 V6Z" fill="none" stroke="#2a5fa8" stroke-width="0.8"/></svg>
<svg class="b" style="left:653.00px;top:144.20px;" width="4" height="2.4" viewBox="0 0 4 2.4"><path d="M0 0 H4 L2 2.4Z" fill="#222"/></svg>
<div class="b" style="left:663.00px;top:139.00px;width:0.80px;height:13.00px;background:#cfcfcf;"></div>
<svg class="b" style="left:667.00px;top:140.40px;" width="10" height="10" viewBox="0 0 10 10"><path d="M0 5 L4.5 1 V3.5 H10 V6.5 H4.5 V9Z" fill="#2f7ad8"/></svg>
<svg class="b" style="left:680.50px;top:144.20px;" width="4" height="2.4" viewBox="0 0 4 2.4"><path d="M0 0 H4 L2 2.4Z" fill="#222"/></svg>
<svg class="b" style="left:689.50px;top:140.40px;" width="10" height="10" viewBox="0 0 10 10"><path d="M10 5 L5.5 1 V3.5 H0 V6.5 H5.5 V9Z" fill="#c8ccd2"/></svg>
<svg class="b" style="left:702.50px;top:144.20px;" width="4" height="2.4" viewBox="0 0 4 2.4"><path d="M0 0 H4 L2 2.4Z" fill="#bbb"/></svg>
<div class="b" style="left:712.50px;top:139.00px;width:0.80px;height:13.00px;background:#cfcfcf;"></div>
<svg class="b" style="left:716.00px;top:140.40px;" width="10" height="10" viewBox="0 0 10 10"><path d="M0 1.5 H4 L5 2.8 H10 V10 H0Z" fill="#e9b949"/><rect x="0" y="3.5" width="10" height="6.5" fill="#f8d775"/></svg>
<svg class="b" style="left:730.50px;top:140.40px;" width="10" height="10" viewBox="0 0 10 10"><path d="M0 1.5 H4 L5 2.8 H10 V10 H0Z" fill="#e9b949"/><rect x="0" y="3.5" width="10" height="6.5" fill="#f8d775"/></svg>
<svg class="b" style="left:744.50px;top:140.40px;" width="10" height="10" viewBox="0 0 10 10"><path d="M5 0.8 L9.6 5 H8.3 V9.5 H1.7 V5 H0.4Z" fill="#fff" stroke="#2f76c8" stroke-width="1.1" stroke-linejoin="round"/><rect x="4" y="6" width="2" height="3.5" fill="#2f76c8"/></svg>
<svg class="b" style="left:759.00px;top:140.40px;" width="10" height="10" viewBox="0 0 10 10"><path d="M1.5 5.5 A3.7 3.7 0 0 1 8 2.5" stroke="#2ea33a" stroke-width="2.2" fill="none"/><path d="M8.5 4.5 A3.7 3.7 0 0 1 2 7.5" stroke="#2ea33a" stroke-width="2.2" fill="none"/><path d="M6.5 0 L10 0.5 L9 4Z M3.5 10 L0 9.5 L1 6Z" fill="#2ea33a"/></svg>
<div class="b" style="left:773.00px;top:139.00px;width:0.80px;height:13.00px;background:#cfcfcf;"></div>
<svg class="b" style="left:776.00px;top:140.40px;" width="10" height="10" viewBox="0 0 10 10"><rect x="0.5" y="0.5" width="8" height="9" fill="#fff" stroke="#8fa3b8" stroke-width="0.8"/><circle cx="5" cy="5" r="2.5" fill="none" stroke="#3f6ea8" stroke-width="1"/><path d="M7 7 L9.5 9.5" stroke="#3f6ea8" stroke-width="1.2"/></svg>
<div class="t w" style="left:789.50px;top:141.97px;font-size:7.6px;color:#222;font-weight:normal;">查找文件</div>
<div class="b" style="left:824.00px;top:139.00px;width:0.80px;height:13.00px;background:#cfcfcf;"></div>
<svg class="b" style="left:826.50px;top:140.40px;" width="10" height="10" viewBox="0 0 10 10"><rect x="0" y="0" width="5" height="4" fill="#f0c850" stroke="#c09020" stroke-width="0.5"/><rect x="5" y="6" width="5" height="4" fill="#f0c850" stroke="#c09020" stroke-width="0.5"/><path d="M2 4 V8 H5" stroke="#777" stroke-width="0.6" fill="none"/></svg>
<div class="t w" style="left:620.00px;top:158.87px;font-size:7.6px;color:#a8a8a8;font-weight:normal;">编辑</div>
<svg class="b" style="left:637.50px;top:161.10px;" width="4" height="2.4" viewBox="0 0 4 2.4"><path d="M0 0 H4 L2 2.4Z" fill="#bbb"/></svg>
<svg class="b" style="left:645.50px;top:157.30px;" width="9" height="9" viewBox="0 0 10 10"><path d="M1 1 L9 9 M9 1 L1 9" stroke="#b8b8b8" stroke-width="2.2"/></svg>
<svg class="b" style="left:659.50px;top:157.30px;" width="10" height="10" viewBox="0 0 10 10"><rect x="1" y="1" width="8" height="8" fill="#e4e4e4" stroke="#c4c4c4" stroke-width="0.8"/></svg>
<svg class="b" style="left:674.50px;top:157.30px;" width="10" height="10" viewBox="0 0 10 10"><rect x="1" y="1" width="8" height="8" fill="#e4e4e4" stroke="#c4c4c4" stroke-width="0.8"/></svg>
<div class="t w" style="left:687.00px;top:158.87px;font-size:7.6px;color:#a8a8a8;font-weight:normal;">属性</div>
<div class="b" style="left:706.00px;top:156.00px;width:0.80px;height:13.00px;background:#cfcfcf;"></div>
<svg class="b" style="left:709.00px;top:157.30px;" width="10" height="10" viewBox="0 0 10 10"><path d="M0 1.5 H4 L5 2.8 H10 V10 H0Z" fill="#e9b949"/><rect x="0" y="3.5" width="10" height="6.5" fill="#f8d775"/><rect x="6" y="0" width="4" height="4" fill="#fff" stroke="#8aa" stroke-width="0.5"/></svg>
<div class="t w" style="left:722.50px;top:158.87px;font-size:7.6px;color:#222;font-weight:normal;">新建</div>
<svg class="b" style="left:740.00px;top:161.10px;" width="4" height="2.4" viewBox="0 0 4 2.4"><path d="M0 0 H4 L2 2.4Z" fill="#222"/></svg>
<div class="b" style="left:768.50px;top:156.00px;width:0.80px;height:13.00px;background:#cfcfcf;"></div>
<svg class="b" style="left:772.50px;top:157.30px;" width="10" height="10" viewBox="0 0 10 10"><rect x="0.5" y="0.5" width="9" height="9" fill="#fff" stroke="#3a6fb8"/><path d="M2.5 5 H7.5 M5 2.5 V7.5" stroke="#3a6fb8" stroke-width="1"/></svg>
<svg class="b" style="left:786.50px;top:157.30px;" width="10" height="10" viewBox="0 0 10 10"><rect x="0.5" y="0.5" width="9" height="9" fill="#fff" stroke="#c8c8c8"/><path d="M2.5 5 H7.5" stroke="#c8c8c8" stroke-width="1"/></svg>
<svg class="b" style="left:800.50px;top:156.80px;" width="11" height="11" viewBox="0 0 12 11"><rect x="0.5" y="0.5" width="11" height="10" fill="#fff" stroke="#2a5fa8" stroke-width="1"/><path d="M3 3 H9 L6.5 6 V8.5 H5.5 V6Z" fill="none" stroke="#2a5fa8" stroke-width="0.8"/></svg>
<div class="b" style="left:228.50px;top:171.00px;width:325.30px;height:13.50px;background:#bfcddb;"></div>
<div class="t w" style="left:231.60px;top:174.57px;font-size:7.6px;color:#111;font-weight:normal;transform:scaleX(0.966);transform-origin:left">F:\FreeNAS驱动\freeNAS[RTL8125网卡驱动]2.5G驱动\</div>
<div class="b" style="left:556.80px;top:171.00px;width:325.60px;height:13.50px;background:#99b4d1;"></div>
<div class="t w" style="left:560.00px;top:174.57px;font-size:7.6px;color:#111;font-weight:normal;">/root/</div>
<div class="b" style="left:228.50px;top:184.50px;width:324.50px;height:278.50px;background:#fff;"></div>
<div class="b" style="left:552.80px;top:184.50px;width:1.00px;height:278.50px;background:#a0a0a0;"></div>
<div class="b" style="left:228.50px;top:184.50px;width:0.80px;height:278.50px;background:#a0a0a0;"></div>
<div class="b" style="left:228.50px;top:463.00px;width:325.30px;height:0.80px;background:#a0a0a0;"></div>
<div class="b" style="left:556.80px;top:184.50px;width:325.60px;height:278.50px;background:#fff;"></div>
<div class="b" style="left:556.80px;top:184.50px;width:0.80px;height:278.50px;background:#a0a0a0;"></div>
<div class="b" style="left:556.80px;top:463.00px;width:325.60px;height:0.80px;background:#a0a0a0;"></div>
<div class="b" style="left:320.90px;top:185.00px;width:0.80px;height:278.00px;background:#f2f4f7;"></div>
<div class="b" style="left:320.90px;top:186.00px;width:0.80px;height:13.00px;background:#e5e5e5;"></div>
<div class="b" style="left:363.10px;top:185.00px;width:0.80px;height:278.00px;background:#f2f4f7;"></div>
<div class="b" style="left:363.10px;top:186.00px;width:0.80px;height:13.00px;background:#e5e5e5;"></div>
<div class="b" style="left:437.00px;top:185.00px;width:0.80px;height:278.00px;background:#f2f4f7;"></div>
<div class="b" style="left:437.00px;top:186.00px;width:0.80px;height:13.00px;background:#e5e5e5;"></div>
<div class="b" style="left:528.00px;top:185.00px;width:0.80px;height:278.00px;background:#f2f4f7;"></div>
<div class="b" style="left:528.00px;top:186.00px;width:0.80px;height:13.00px;background:#e5e5e5;"></div>
<div class="b" style="left:649.00px;top:185.00px;width:0.80px;height:278.00px;background:#f2f4f7;"></div>
<div class="b" style="left:649.00px;top:186.00px;width:0.80px;height:13.00px;background:#e5e5e5;"></div>
<div class="b" style="left:692.00px;top:185.00px;width:0.80px;height:278.00px;background:#f2f4f7;"></div>
<div class="b" style="left:692.00px;top:186.00px;width:0.80px;height:13.00px;background:#e5e5e5;"></div>
<div class="b" style="left:783.00px;top:185.00px;width:0.80px;height:278.00px;background:#f2f4f7;"></div>
<div class="b" style="left:783.00px;top:186.00px;width:0.80px;height:13.00px;background:#e5e5e5;"></div>
<div class="b" style="left:831.30px;top:185.00px;width:0.80px;height:278.00px;background:#f2f4f7;"></div>
<div class="b" style="left:831.30px;top:186.00px;width:0.80px;height:13.00px;background:#e5e5e5;"></div>
<div class="b" style="left:867.80px;top:185.00px;width:0.80px;height:278.00px;background:#f2f4f7;"></div>
<div class="b" style="left:867.80px;top:186.00px;width:0.80px;height:13.00px;background:#e5e5e5;"></div>
<div class="t w" style="left:233.00px;top:189.07px;font-size:7.6px;color:#1a1a1a;font-weight:normal;">名字</div>
<div class="t w" style="right:805.50px;top:189.07px;font-size:7.6px;color:#1a1a1a;font-weight:normal;">大小</div>
<div class="t w" style="left:367.30px;top:189.07px;font-size:7.6px;color:#1a1a1a;font-weight:normal;">类型</div>
<div class="t w" style="left:440.60px;top:189.07px;font-size:7.6px;color:#1a1a1a;font-weight:normal;">已改变</div>
<svg class="b" style="left:271.50px;top:185.50px;" width="6" height="3" viewBox="0 0 6 3"><path d="M0 3 L3 0 L6 3" stroke="#999" stroke-width="0.7" fill="none"/></svg>
<div class="t w" style="left:561.70px;top:189.07px;font-size:7.6px;color:#1a1a1a;font-weight:normal;">名字</div>
<div class="t w" style="right:478.40px;top:189.07px;font-size:7.6px;color:#1a1a1a;font-weight:normal;">大小</div>
<div class="t w" style="left:695.80px;top:189.07px;font-size:7.6px;color:#1a1a1a;font-weight:normal;">已改变</div>
<div class="t w" style="left:786.70px;top:189.07px;font-size:7.6px;color:#1a1a1a;font-weight:normal;">权限</div>
<div class="t w" style="left:835.00px;top:189.07px;font-size:7.6px;color:#1a1a1a;font-weight:normal;">拥有者</div>
<svg class="b" style="left:600.50px;top:185.50px;" width="6" height="3" viewBox="0 0 6 3"><path d="M0 3 L3 0 L6 3" stroke="#999" stroke-width="0.7" fill="none"/></svg>
<svg class="b" style="left:233.30px;top:202.30px;" width="7.5" height="10" viewBox="0 0 7.5 10"><rect x="0.3" y="0.3" width="6.9" height="9.4" fill="#fae08f" stroke="#eccb6a" stroke-width="0.6"/><path d="M2.2 4 V7.3 H5.8" stroke="#333" stroke-width="0.9" fill="none"/><path d="M0.9 5.2 L2.2 3.6 L3.5 5.2" stroke="#333" stroke-width="0.9" fill="none"/></svg>
<div class="t w" style="left:242.90px;top:203.58px;font-size:7.7px;color:#1a1a1a;font-weight:normal;">..</div>
<div class="t w" style="left:367.30px;top:203.58px;font-size:7.7px;color:#1a1a1a;font-weight:normal;">上级目录</div>
<div class="t w" style="left:440.60px;top:203.58px;font-size:7.7px;color:#1a1a1a;font-weight:normal;">2021-08-26</div>
<div class="t w" style="left:485.00px;top:203.58px;font-size:7.7px;color:#1a1a1a;font-weight:normal;">13:13:52</div>
<svg class="b" style="left:233.30px;top:214.98px;" width="7.5" height="10" viewBox="0 0 7.5 10"><rect x="0.3" y="0.3" width="6.9" height="9.4" fill="#fae08f" stroke="#eccb6a" stroke-width="0.6"/></svg>
<div class="t w" style="left:242.90px;top:216.26px;font-size:7.7px;color:#1a1a1a;font-weight:normal;">freeNAS12</div>
<div class="t w" style="left:367.30px;top:216.26px;font-size:7.7px;color:#1a1a1a;font-weight:normal;">文件夹</div>
<div class="t w" style="left:440.60px;top:216.26px;font-size:7.7px;color:#1a1a1a;font-weight:normal;">2020-08-01</div>
<div class="t w" style="left:485.00px;top:216.26px;font-size:7.7px;color:#1a1a1a;font-weight:normal;">01:36:28</div>
<svg class="b" style="left:233.30px;top:227.66px;" width="7.5" height="10" viewBox="0 0 7.5 10"><rect x="0.3" y="0.3" width="6.9" height="9.4" fill="#fae08f" stroke="#eccb6a" stroke-width="0.6"/></svg>
<div class="t w" style="left:242.90px;top:228.94px;font-size:7.7px;color:#1a1a1a;font-weight:normal;">freeNAS11</div>
<div class="t w" style="left:367.30px;top:228.94px;font-size:7.7px;color:#1a1a1a;font-weight:normal;">文件夹</div>
<div class="t w" style="left:440.60px;top:228.94px;font-size:7.7px;color:#1a1a1a;font-weight:normal;">2020-08-01</div>
<div class="t w" style="left:485.00px;top:228.94px;font-size:7.7px;color:#1a1a1a;font-weight:normal;">01:36:21</div>
<svg class="b" style="left:233.30px;top:240.34px;" width="7.5" height="10" viewBox="0 0 7.5 10"><rect x="0.4" y="0.4" width="6.7" height="9.2" fill="#fff" stroke="#8a9bb0" stroke-width="0.8"/><rect x="1.8" y="4.5" width="4" height="3.5" fill="#2c6cc4"/></svg>
<div class="t w" style="left:242.90px;top:241.62px;font-size:7.7px;color:#1a1a1a;font-weight:normal;">freeNAS2.png</div>
<div class="t w" style="right:806.00px;top:241.62px;font-size:7.7px;color:#1a1a1a;font-weight:normal;">30 KB</div>
<div class="t w" style="left:367.30px;top:241.62px;font-size:7.7px;color:#1a1a1a;font-weight:normal;">PNG 文件</div>
<div class="t w" style="left:440.60px;top:241.62px;font-size:7.7px;color:#1a1a1a;font-weight:normal;">2020-08-01</div>
<div class="t w" style="left:485.00px;top:241.62px;font-size:7.7px;color:#1a1a1a;font-weight:normal;">01:38:51</div>
<svg class="b" style="left:233.30px;top:253.02px;" width="7.5" height="10" viewBox="0 0 7.5 10"><rect x="0.4" y="0.4" width="6.7" height="9.2" fill="#f4f4f4" stroke="#a0a0a0" stroke-width="0.8"/></svg>
<div class="t w" style="left:242.90px;top:254.30px;font-size:7.7px;color:#1a1a1a;font-weight:normal;transform:scaleX(0.9);transform-origin:left">FREENAS2.5G网卡添…</div>
<div class="t w" style="right:806.00px;top:254.30px;font-size:7.7px;color:#1a1a1a;font-weight:normal;">1 KB</div>
<div class="t w" style="left:367.30px;top:254.30px;font-size:7.7px;color:#1a1a1a;font-weight:normal;">文本文档</div>
<div class="t w" style="left:440.60px;top:254.30px;font-size:7.7px;color:#1a1a1a;font-weight:normal;">2020-08-01</div>
<div class="t w" style="left:485.00px;top:254.30px;font-size:7.7px;color:#1a1a1a;font-weight:normal;">01:44:00</div>
<svg class="b" style="left:233.30px;top:265.70px;" width="7.5" height="10" viewBox="0 0 7.5 10"><rect x="0.4" y="0.4" width="6.7" height="9.2" fill="#fff" stroke="#8a9bb0" stroke-width="0.8"/><rect x="1.8" y="4.5" width="4" height="3.5" fill="#2c6cc4"/></svg>
<div class="t w" style="left:242.90px;top:266.98px;font-size:7.7px;color:#1a1a1a;font-weight:normal;">freeNAS1.png</div>
<div class="t w" style="right:806.00px;top:266.98px;font-size:7.7px;color:#1a1a1a;font-weight:normal;">32 KB</div>
<div class="t w" style="left:367.30px;top:266.98px;font-size:7.7px;color:#1a1a1a;font-weight:normal;">PNG 文件</div>
<div class="t w" style="left:440.60px;top:266.98px;font-size:7.7px;color:#1a1a1a;font-weight:normal;">2020-08-01</div>
<div class="t w" style="left:485.00px;top:266.98px;font-size:7.7px;color:#1a1a1a;font-weight:normal;">01:38:38</div>
<svg class="b" style="left:561.20px;top:202.10px;" width="7.5" height="10" viewBox="0 0 7.5 10"><rect x="0.3" y="0.3" width="6.9" height="9.4" fill="#fae08f" stroke="#eccb6a" stroke-width="0.6"/><path d="M2.2 4 V7.3 H5.8" stroke="#333" stroke-width="0.9" fill="none"/><path d="M0.9 5.2 L2.2 3.6 L3.5 5.2" stroke="#333" stroke-width="0.9" fill="none"/></svg>
<div class="t w" style="left:571.00px;top:203.38px;font-size:7.7px;color:#1a1a1a;font-weight:normal;">..</div>
<div class="t w" style="left:695.80px;top:203.38px;font-size:7.7px;color:#1a1a1a;font-weight:normal;">2021-08-27 13:54:26</div>
<div class="t w" style="left:786.70px;top:203.38px;font-size:7.7px;color:#1a1a1a;font-weight:normal;">rwxr-xr-x</div>
<div class="t w" style="left:835.00px;top:203.38px;font-size:7.7px;color:#1a1a1a;font-weight:normal;">root</div>
<svg class="b" style="left:561.20px;top:214.95px;" width="7.5" height="10" viewBox="0 0 7.5 10"><rect x="0.3" y="0.3" width="6.9" height="9.4" fill="#fae08f" stroke="#eccb6a" stroke-width="0.6"/></svg>
<div class="t w" style="left:571.00px;top:216.23px;font-size:7.7px;color:#1a1a1a;font-weight:normal;">samba</div>
<div class="t w" style="left:695.80px;top:216.23px;font-size:7.7px;color:#1a1a1a;font-weight:normal;">2021-08-26 14:47:10</div>
<div class="t w" style="left:786.70px;top:216.23px;font-size:7.7px;color:#1a1a1a;font-weight:normal;">rwxr-xr-x</div>
<div class="t w" style="left:835.00px;top:216.23px;font-size:7.7px;color:#1a1a1a;font-weight:normal;">root</div>
<svg class="b" style="left:561.20px;top:227.80px;" width="7.5" height="10" viewBox="0 0 7.5 10"><rect x="0.3" y="0.3" width="6.9" height="9.4" fill="#fae08f" stroke="#eccb6a" stroke-width="0.6"/></svg>
<div class="t w" style="left:571.00px;top:229.08px;font-size:7.7px;color:#1a1a1a;font-weight:normal;">syslog</div>
<div class="t w" style="left:695.80px;top:229.08px;font-size:7.7px;color:#1a1a1a;font-weight:normal;">2021-08-26 14:46:55</div>
<div class="t w" style="left:786.70px;top:229.08px;font-size:7.7px;color:#1a1a1a;font-weight:normal;">rwxr-xr-x</div>
<div class="t w" style="left:835.00px;top:229.08px;font-size:7.7px;color:#1a1a1a;font-weight:normal;">root</div>
<div class="b" style="left:570.50px;top:201.50px;width:6.50px;height:10.50px;background:transparent;box-sizing:border-box;border:0.8px solid #9a9a9a;border-radius:1px"></div>
<div class="t w" style="left:230.00px;top:467.25px;font-size:7.5px;color:#111;font-weight:normal;word-spacing:0.5px;-webkit-text-stroke:0.15px #111">0 B / 60.9 KB， 0 / 5</div>
<div class="t w" style="left:558.00px;top:467.25px;font-size:7.5px;color:#111;font-weight:normal;letter-spacing:0.4px;-webkit-text-stroke:0.15px #111">0 B / 0 B， 0 / 2</div>
<div class="t w" style="right:286.00px;top:467.25px;font-size:7.5px;color:#222;font-weight:normal;">12已隐藏</div>
<div class="b" style="left:228.00px;top:477.00px;width:654.40px;height:0.80px;background:#dcdcdc;"></div>
<div class="b" style="left:747.00px;top:478.50px;width:0.80px;height:10.00px;background:#d8d8d8;"></div>
<div class="b" style="left:770.00px;top:478.50px;width:0.80px;height:10.00px;background:#d8d8d8;"></div>
<div class="b" style="left:811.00px;top:478.50px;width:0.80px;height:10.00px;background:#d8d8d8;"></div>
<div class="b" style="left:833.00px;top:478.50px;width:0.80px;height:10.00px;background:#d8d8d8;"></div>
<svg class="b" style="left:753.50px;top:480.00px;" width="9" height="10" viewBox="0 0 9 10"><rect x="0.5" y="4" width="8" height="6" rx="1" fill="#f2b632"/><path d="M2.5 4 V2.8 A2 2 0 0 1 6.5 2.8 V4" stroke="#c98b10" stroke-width="1" fill="none"/></svg>
<div class="t w" style="left:778.00px;top:479.95px;font-size:7.5px;color:#222;font-weight:normal;">SFTP-3</div>
<svg class="b" style="left:817.00px;top:479.50px;" width="10" height="9" viewBox="0 0 10 9"><rect x="0.5" y="0.5" width="7" height="6" fill="#ddd" stroke="#aaa" stroke-width="0.8"/><rect x="2.5" y="7" width="4" height="1.5" fill="#bbb"/></svg>
<div class="t w" style="left:844.00px;top:479.95px;font-size:7.5px;color:#222;font-weight:normal;">0:05:00</div>
<div class="b" style="left:561.60px;top:137.80px;width:55.30px;height:14.70px;background:#fff;box-sizing:border-box;border:1px solid #0078d7"></div>
<div class="b" style="left:608.00px;top:138.80px;width:8.90px;height:12.70px;background:#cce4f7;"></div>
<svg class="b" style="left:610.50px;top:144.10px;" width="4" height="2.4" viewBox="0 0 4 2.4"><path d="M0 0 H4 L2 2.4Z" fill="#333"/></svg>
<svg class="b" style="left:564.50px;top:140.30px;" width="9" height="10" viewBox="0 0 10 10"><path d="M0 1.5 H4 L5 2.8 H10 V10 H0Z" fill="#e9b949"/><rect x="0" y="3.5" width="10" height="6.5" fill="#f8d775"/></svg>
<div class="t w" style="left:575.50px;top:141.23px;font-size:8px;color:#111;font-weight:normal;">root</div>
<div class="b" style="left:562.00px;top:153.30px;width:55.00px;height:24.50px;background:#fff;box-sizing:border-box;border:1px solid #a0a0a0"></div>
<div class="b" style="left:563.00px;top:154.50px;width:53.00px;height:11.40px;background:#0078d7;"></div>
<svg class="b" style="left:566.50px;top:155.30px;" width="7.8" height="9.8" viewBox="0 0 7.8 9.8"><rect x="0" y="0" width="7.8" height="9.8" fill="#f8d775"/></svg>
<div class="t w" style="left:577.30px;top:156.63px;font-size:8px;color:#fff;font-weight:normal;">/ &lt;root&gt;</div>
<svg class="b" style="left:572.40px;top:166.80px;" width="7.8" height="9.8" viewBox="0 0 7.8 9.8"><rect x="0" y="0" width="7.8" height="9.8" fill="#f8d775"/></svg>
<div class="t w" style="left:583.50px;top:167.83px;font-size:8px;color:#111;font-weight:normal;">root</div>
<svg class="b" style="left:603.00px;top:157.00px;" width="8" height="12" viewBox="0 0 8 12"><path d="M0.5 0.5 L0.5 9.5 L2.8 7.5 L4.5 11 L6 10.3 L4.3 6.9 L7.3 6.9Z" fill="#fff" stroke="#000" stroke-width="0.8"/></svg>
</body></html>
